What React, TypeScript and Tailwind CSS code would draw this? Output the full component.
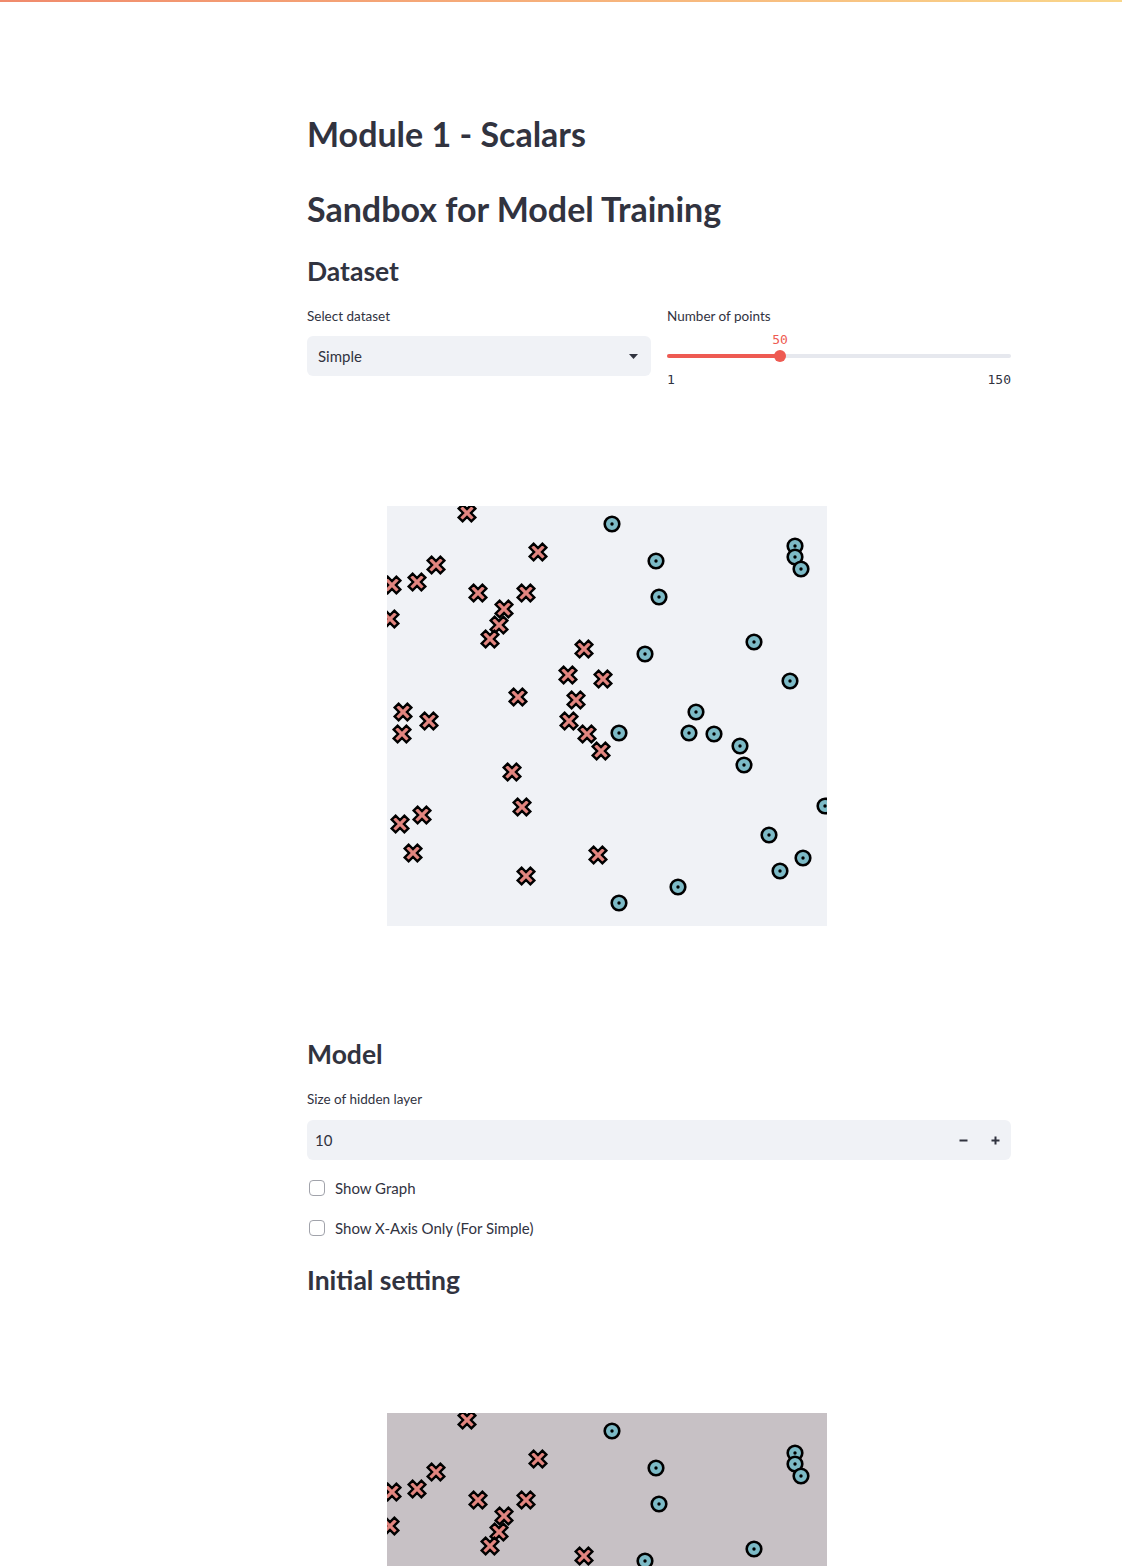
import React from "react";

const crosses: [number, number][] = [
  [80, 7], [151, 46], [49, 59], [30, 76], [5, 79], [91, 87], [139, 87], [117, 103],
  [3, 113], [112, 119], [103, 133], [197, 143], [181, 169], [216, 173], [131, 191],
  [189, 194], [16, 206], [42, 215], [15, 228], [182, 215], [200, 228], [214, 245],
  [125, 266], [135, 301], [35, 309], [13, 318], [26, 347], [211, 349], [139, 370],
];

const circles: [number, number][] = [
  [225, 18], [269, 55], [408, 40], [408, 51], [414, 63], [272, 91], [367, 136],
  [258, 148], [403, 175], [309, 206], [232, 227], [302, 227], [327, 228], [353, 240],
  [357, 259], [438, 300], [382, 329], [416, 352], [393, 365], [291, 381], [232, 397],
];

// plus sign rotated 45deg
const a = 2.8;
const b = 9;
const plus = [
  [a, -b], [a, -a], [b, -a], [b, a], [a, a], [a, b],
  [-a, b], [-a, a], [-b, a], [-b, -a], [-a, -a], [-a, -b],
];
const crossPts = plus
  .map(([x, y]) => {
    const c = Math.SQRT1_2;
    return `${((x - y) * c).toFixed(2)},${((x + y) * c).toFixed(2)}`;
  })
  .join(" ");

function Scatter({ bg }: { bg: string }) {
  return (
    <svg width={440} height={420} viewBox="0 0 440 420" className="block">
      <rect width={440} height={420} fill={bg} />
      {crosses.map(([x, y], i) => (
        <polygon
          key={"x" + i}
          points={crossPts}
          transform={`translate(${x} ${y})`}
          fill="#e2857f"
          stroke="#000"
          strokeWidth={2.4}
          strokeLinejoin="miter"
        />
      ))}
      {circles.map(([x, y], i) => (
        <g key={"o" + i} transform={`translate(${x} ${y})`}>
          <circle r={7.3} fill="#7cbac6" stroke="#000" strokeWidth={2.6} />
          <circle r={1.7} fill="#000" />
        </g>
      ))}
    </svg>
  );
}

function Checkbox({ label }: { label: string }) {
  return (
    <label className="flex h-6 items-center gap-[10px] pl-[2px]">
      <span className="h-4 w-4 rounded-[4px] border-[1.5px] border-[#a1a3ab] bg-white" />
      <span className="text-[15px] text-[#31333f]">{label}</span>
    </label>
  );
}

export default function App() {
  return (
    <div className="min-h-screen bg-white font-['Lato',sans-serif] text-[#31333f]">
      <div className="h-[2px] bg-gradient-to-r from-[#f08a6c] to-[#f9d68a]" />

      <div className="ml-[307px] w-[704px]">
        <h1 className="mt-[108px] h-12 text-[34px] font-bold leading-[48px]">Module 1 - Scalars</h1>
        <h1 className="mt-[27px] h-12 text-[34px] font-bold leading-[48px]">Sandbox for Model Training</h1>
        <h3 className="mt-[14px] h-12 text-[26.5px] font-bold leading-[48px]">Dataset</h3>

        {/* Dataset controls */}
        <div className="mt-[11px] grid h-[82px] grid-cols-2 gap-4">
          <div>
            <div className="h-5 text-[13.5px] leading-5">Select dataset</div>
            <div className="mt-[10px] flex h-10 items-center justify-between rounded-md bg-[#f0f2f6] pl-[11px] pr-[13px]">
              <span className="text-[15px]">Simple</span>
              <svg width="9" height="5" viewBox="0 0 9 5">
                <path d="M0 0h9L4.5 5z" fill="#31333f" />
              </svg>
            </div>
          </div>
          <div>
            <div className="h-5 text-[13.5px] leading-5">Number of points</div>
            <div className="relative mt-[6px] h-4">
              <span className="absolute left-[113px] -translate-x-1/2 font-['DejaVu_Sans_Mono',monospace] text-[13px] leading-4 text-[#ee5a52]">
                50
              </span>
            </div>
            <div className="relative mt-[2px] flex h-3 items-center">
              <div className="h-1 w-full rounded-full bg-[#e6e8ee]" />
              <div className="absolute left-0 h-1 w-[113px] rounded-l-full bg-[#ee5a52]" />
              <div className="absolute left-[107px] h-3 w-3 rounded-full bg-[#ee5a52]" />
            </div>
            <div className="mt-[10px] flex justify-between font-['DejaVu_Sans_Mono',monospace] text-[13px] leading-4">
              <span>1</span>
              <span>150</span>
            </div>
          </div>
        </div>

        <div className="ml-[80px] mt-[118px]">
          <Scatter bg="#f0f2f6" />
        </div>

        <h3 className="mt-[104px] h-12 text-[26.5px] font-bold leading-[48px]">Model</h3>
        <div className="mt-[11px] h-5 text-[13.5px] leading-5">Size of hidden layer</div>
        <div className="mt-[11px] flex h-10 items-center rounded-md bg-[#f0f2f6] pl-2">
          <span className="flex-1 text-[15px]">10</span>
          <div className="flex h-full w-8 items-center justify-center">
            <svg width="9" height="9" viewBox="0 0 9 9">
              <path d="M0.5 4.5h8" stroke="#31333f" strokeWidth="2" />
            </svg>
          </div>
          <div className="flex h-full w-8 items-center justify-center">
            <svg width="9" height="9" viewBox="0 0 9 9">
              <path d="M0.5 4.5h8M4.5 0.5v8" stroke="#31333f" strokeWidth="2" />
            </svg>
          </div>
        </div>

        <div className="mt-4">
          <Checkbox label="Show Graph" />
        </div>
        <div className="mt-4">
          <Checkbox label="Show X-Axis Only (For Simple)" />
        </div>

        <h3 className="mt-[16px] h-12 text-[26.5px] font-bold leading-[48px]">Initial setting</h3>

        <div className="ml-[80px] mt-[109px]">
          <Scatter bg="#c7c1c5" />
        </div>
      </div>
    </div>
  );
}
